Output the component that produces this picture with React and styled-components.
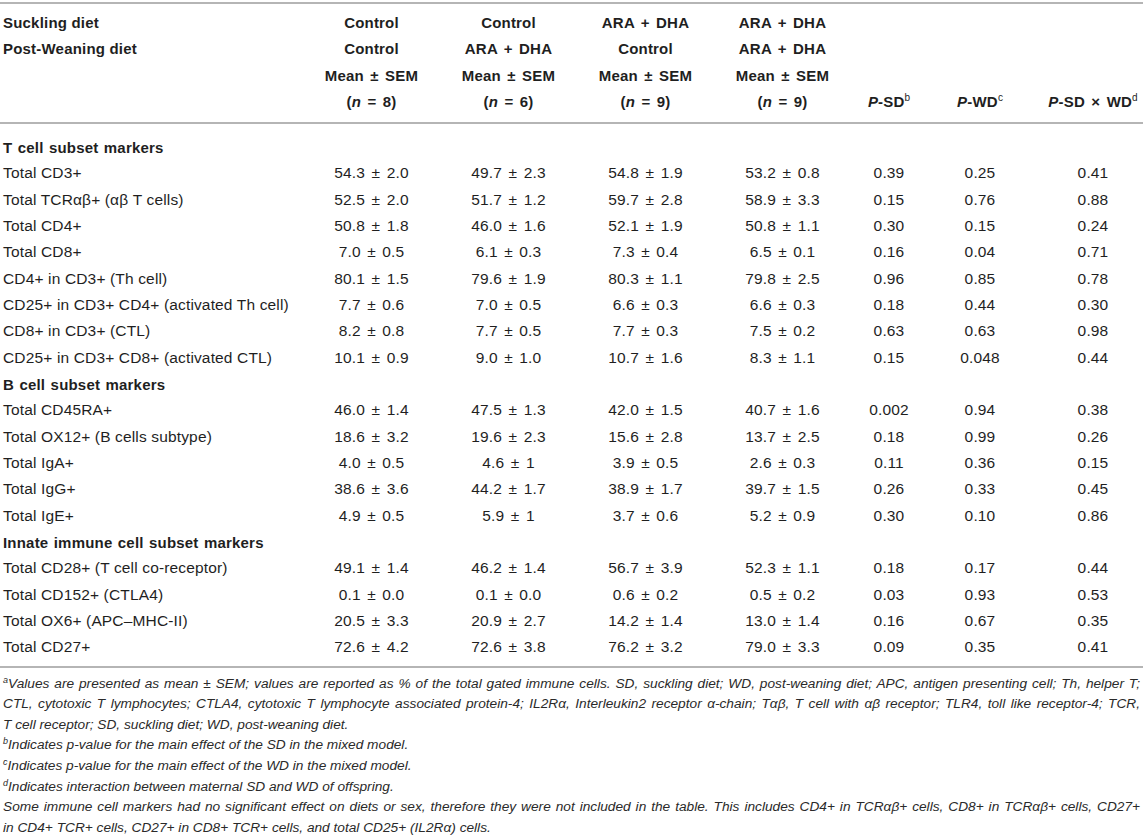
import React from 'react';
import styled, { createGlobalStyle } from 'styled-components';

const GlobalStyle = createGlobalStyle`
	html, body {
		margin: 0;
		padding: 0;
		background: #ffffff;
	}
	body {
		font-family: 'Liberation Sans', Arial, sans-serif;
		color: #1f1f1f;
	}
`;

const Page = styled.div`
	width: 1143px;
	padding-top: 2px;
	box-sizing: border-box;
`;

const Head = styled.div`
	border-top: 2px solid #b5b5b5;
	border-bottom: 2px solid #b5b5b5;
	padding: 5px 0 7px;
`;

const Body = styled.div`
	border-bottom: 2px solid #b5b5b5;
	padding: 10px 0 5px;
`;

const Row = styled.div`
	display: grid;
	grid-template-columns: 303px repeat(4, 137px) 76px 106px 1fr;
	height: ${(p) => (p.$head ? '26.5px' : '26.33px')};
	align-items: center;
	font-size: ${(p) => (p.$head ? '15px' : '15.5px')};
	font-weight: ${(p) => (p.$head ? 700 : 400)};
	letter-spacing: ${(p) => (p.$head ? '0.2px' : '0.15px')};
	white-space: nowrap;
`;

const Label = styled.div`
	padding-left: 3px;
	font-weight: ${(p) => (p.$bold ? 700 : 'inherit')};
	font-size: ${(p) => (p.$bold ? '15px' : 'inherit')};
	letter-spacing: ${(p) => (p.$bold ? '0.2px' : 'inherit')};
	word-spacing: ${(p) => (p.$bold ? '1px' : '0')};
`;

const Cell = styled.div`
	text-align: center;
	word-spacing: 2px;
	padding-left: ${(p) => (p.$last ? '10px' : '0')};
`;

const Sup = styled.sup`
	font-size: 10px;
	font-weight: 400;
	vertical-align: 6px;
	line-height: 0;
	letter-spacing: 0;
`;

const Notes = styled.div`
	padding: 6px 3px 0;
	font-size: 13.7px;
	font-style: italic;
	line-height: 20.6px;
	color: #2a2a2a;
`;

const Line = styled.span`
	display: block;
	text-align: ${(p) => (p.$fill ? 'justify' : 'left')};
	text-align-last: ${(p) => (p.$fill ? 'justify' : 'left')};
`;

const NoteSup = styled.sup`
	font-size: 9px;
	vertical-align: 5px;
	line-height: 0;
`;

const pm = '\u00b1';

const sections = [
	{
		title: 'T cell subset markers',
		rows: [
			['Total CD3+', '54.3', '2.0', '49.7', '2.3', '54.8', '1.9', '53.2', '0.8', '0.39', '0.25', '0.41'],
			['Total TCRαβ+ (αβ T cells)', '52.5', '2.0', '51.7', '1.2', '59.7', '2.8', '58.9', '3.3', '0.15', '0.76', '0.88'],
			['Total CD4+', '50.8', '1.8', '46.0', '1.6', '52.1', '1.9', '50.8', '1.1', '0.30', '0.15', '0.24'],
			['Total CD8+', '7.0', '0.5', '6.1', '0.3', '7.3', '0.4', '6.5', '0.1', '0.16', '0.04', '0.71'],
			['CD4+ in CD3+ (Th cell)', '80.1', '1.5', '79.6', '1.9', '80.3', '1.1', '79.8', '2.5', '0.96', '0.85', '0.78'],
			['CD25+ in CD3+ CD4+ (activated Th cell)', '7.7', '0.6', '7.0', '0.5', '6.6', '0.3', '6.6', '0.3', '0.18', '0.44', '0.30'],
			['CD8+ in CD3+ (CTL)', '8.2', '0.8', '7.7', '0.5', '7.7', '0.3', '7.5', '0.2', '0.63', '0.63', '0.98'],
			['CD25+ in CD3+ CD8+ (activated CTL)', '10.1', '0.9', '9.0', '1.0', '10.7', '1.6', '8.3', '1.1', '0.15', '0.048', '0.44'],
		],
	},
	{
		title: 'B cell subset markers',
		rows: [
			['Total CD45RA+', '46.0', '1.4', '47.5', '1.3', '42.0', '1.5', '40.7', '1.6', '0.002', '0.94', '0.38'],
			['Total OX12+ (B cells subtype)', '18.6', '3.2', '19.6', '2.3', '15.6', '2.8', '13.7', '2.5', '0.18', '0.99', '0.26'],
			['Total IgA+', '4.0', '0.5', '4.6', '1', '3.9', '0.5', '2.6', '0.3', '0.11', '0.36', '0.15'],
			['Total IgG+', '38.6', '3.6', '44.2', '1.7', '38.9', '1.7', '39.7', '1.5', '0.26', '0.33', '0.45'],
			['Total IgE+', '4.9', '0.5', '5.9', '1', '3.7', '0.6', '5.2', '0.9', '0.30', '0.10', '0.86'],
		],
	},
	{
		title: 'Innate immune cell subset markers',
		rows: [
			['Total CD28+ (T cell co-receptor)', '49.1', '1.4', '46.2', '1.4', '56.7', '3.9', '52.3', '1.1', '0.18', '0.17', '0.44'],
			['Total CD152+ (CTLA4)', '0.1', '0.0', '0.1', '0.0', '0.6', '0.2', '0.5', '0.2', '0.03', '0.93', '0.53'],
			['Total OX6+ (APC–MHC-II)', '20.5', '3.3', '20.9', '2.7', '14.2', '1.4', '13.0', '1.4', '0.16', '0.67', '0.35'],
			['Total CD27+', '72.6', '4.2', '72.6', '3.8', '76.2', '3.2', '79.0', '3.3', '0.09', '0.35', '0.41'],
		],
	},
];

const groups = [
	['Control', 'Control', 8],
	['Control', 'ARA + DHA', 6],
	['ARA + DHA', 'Control', 9],
	['ARA + DHA', 'ARA + DHA', 9],
];

const DataRow = ({ row }) => {
	const [label, ...v] = row;
	return (
		<Row>
			<Label>{label}</Label>
			{[0, 2, 4, 6].map((i) => (
				<Cell key={i}>
					{v[i]} {pm} {v[i + 1]}
				</Cell>
			))}
			<Cell>{v[8]}</Cell>
			<Cell>{v[9]}</Cell>
			<Cell $last>{v[10]}</Cell>
		</Row>
	);
};

const App = () => {
	return (
		<Page>
			<GlobalStyle />
			<Head>
				<Row $head>
					<Label>Suckling diet</Label>
					{groups.map((g, i) => (
						<Cell key={i}>{g[0]}</Cell>
					))}
				</Row>
				<Row $head>
					<Label>Post-Weaning diet</Label>
					{groups.map((g, i) => (
						<Cell key={i}>{g[1]}</Cell>
					))}
				</Row>
				<Row $head>
					<Label />
					{groups.map((g, i) => (
						<Cell key={i}>Mean {pm} SEM</Cell>
					))}
				</Row>
				<Row $head>
					<Label />
					{groups.map((g, i) => (
						<Cell key={i}>
							(<i>n</i> = {g[2]})
						</Cell>
					))}
					<Cell>
						<i>P</i>-SD<Sup>b</Sup>
					</Cell>
					<Cell>
						<i>P</i>-WD<Sup>c</Sup>
					</Cell>
					<Cell $last>
						<i>P</i>-SD × WD<Sup>d</Sup>
					</Cell>
				</Row>
			</Head>
			<Body>
				{sections.map((s) => (
					<React.Fragment key={s.title}>
						<Row>
							<Label $bold>{s.title}</Label>
						</Row>
						{s.rows.map((r) => (
							<DataRow key={r[0]} row={r} />
						))}
					</React.Fragment>
				))}
			</Body>
			<Notes>
				<Line $fill>
					<NoteSup>a</NoteSup>Values are presented as mean {pm} SEM; values are reported as % of the total gated immune cells. SD, suckling diet; WD, post-weaning diet; APC, antigen presenting cell; Th, helper T;
				</Line>
				<Line $fill>
					CTL, cytotoxic T lymphocytes; CTLA4, cytotoxic T lymphocyte associated protein-4; IL2Rα, Interleukin2 receptor α-chain; Tαβ, T cell with αβ receptor; TLR4, toll like receptor-4; TCR,
				</Line>
				<Line>T cell receptor; SD, suckling diet; WD, post-weaning diet.</Line>
				<Line>
					<NoteSup>b</NoteSup>Indicates p-value for the main effect of the SD in the mixed model.
				</Line>
				<Line>
					<NoteSup>c</NoteSup>Indicates p-value for the main effect of the WD in the mixed model.
				</Line>
				<Line>
					<NoteSup>d</NoteSup>Indicates interaction between maternal SD and WD of offspring.
				</Line>
				<Line $fill>
					Some immune cell markers had no significant effect on diets or sex, therefore they were not included in the table. This includes CD4+ in TCRαβ+ cells, CD8+ in TCRαβ+ cells, CD27+
				</Line>
				<Line>in CD4+ TCR+ cells, CD27+ in CD8+ TCR+ cells, and total CD25+ (IL2Rα) cells.</Line>
			</Notes>
		</Page>
	);
};

export default App;
